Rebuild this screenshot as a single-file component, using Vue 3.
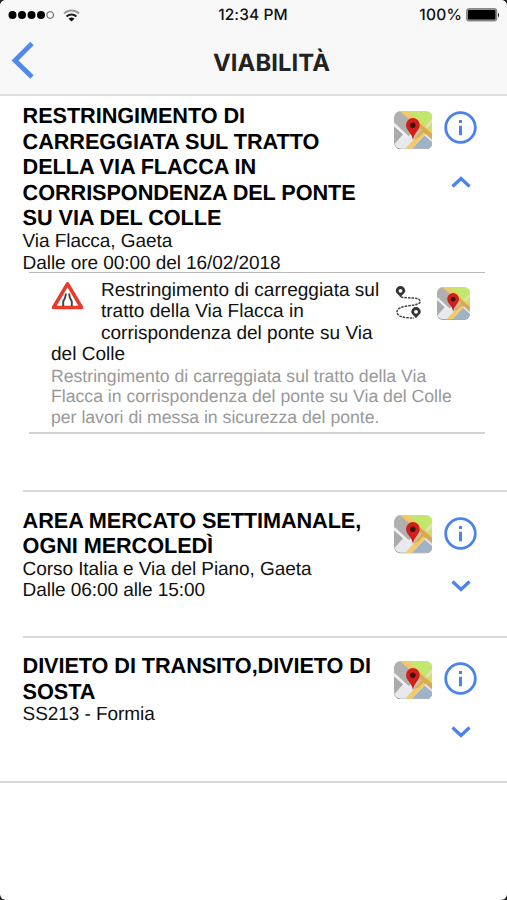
<template>
  <div class="screen">
    <svg class="sprite" aria-hidden="true">
      <symbol id="map" viewBox="0 0 38 38">
        <clipPath id="map-clip"><rect width="38" height="37.2" rx="7" /></clipPath>
        <rect y=".8" width="38" height="37.2" rx="7" fill="#8d918f" />
        <g clip-path="url(#map-clip)">
          <rect width="38" height="38" fill="#e7e9ed" />
          <path d="M0 0h10l14 15-10 10L0 12z" fill="#b0b0b0" />
          <path d="M0 15l9 8-9 10z" fill="#a9abac" />
          <path d="M0 13l14 13" stroke="#f0f0ee" stroke-width="2.5" />
          <path d="M12 0h26v22L28 16z" fill="#c3e66d" />
          <path d="M17 38l13-14 8 7v7z" fill="#9eb3c5" />
          <path d="M38 9L28 20" stroke="#e9dfbd" stroke-width="2.5" />
          <path d="M6 -3l34 29" stroke="#f2c869" stroke-width="5" />
          <path d="M31 19L11 41" stroke="#f3ca68" stroke-width="5" />
          <path d="M24 11l14 12v6l-9-8-5 5-5 2z" fill="#a77c32" opacity=".4" />
        </g>
        <path d="M18.5 7a6.7 6.7 0 0 0-6.7 6.8c0 5 5.4 7.3 6.9 14.4 1.4-7.1 6.6-9.4 6.6-14.4A6.7 6.7 0 0 0 18.5 7z" fill="#cf2019" />
        <circle cx="18.5" cy="14" r="2.7" fill="#41100d" />
      </symbol>
      <symbol id="info" viewBox="0 0 33 33">
        <circle cx="16.5" cy="16.5" r="14.8" fill="none" stroke="#4a83ec" stroke-width="2.8" />
        <path d="M16.5 14.8v9.4M16.5 9v3" stroke="#4a83ec" stroke-width="3" />
      </symbol>
      <symbol id="chevron" viewBox="0 0 20 12">
        <path d="M1.5 1.5l8.5 8 8.5-8" fill="none" stroke="#4a83ec" stroke-width="3.2" />
      </symbol>
    </svg>

    <header class="header">
      <div class="status">
        <div class="status-left">
          <svg width="46" height="10" viewBox="0 0 46 10">
            <circle v-for="n in 4" :key="n" :cx="n * 9.5 - 5" cy="5" r="4" />
            <circle cx="42.2" cy="5" r="3.4" fill="none" stroke="#555" />
          </svg>
          <svg width="17" height="13" viewBox="0 0 17 13" fill="none" stroke-width="2">
            <path d="M1 4.5a11 11 0 0 1 15 0" stroke="#9b9b9b" />
            <path d="M3.500 7.500a7.200 7.200 0 0 1 10 0" stroke="#222" />
            <path d="M8.500 12.500L5.500 9.800a4.500 4.500 0 0 1 6 0z" fill="#111" />
          </svg>
        </div>
        <span class="time">12:34 PM</span>
        <div class="status-right">
          <span class="percent">100%</span>
          <svg width="34" height="14" viewBox="0 0 34 14">
            <rect x=".7" y=".7" width="30" height="12.2" rx="1.8" fill="#999" stroke="#777" />
            <rect x="2" y="2" width="27.4" height="9.6" rx="1" />
            <path d="M32 4.5q2 2.500 0 5z" />
          </svg>
        </div>
      </div>
      <div class="navbar">
        <button class="back" aria-label="Indietro">
          <svg width="24" height="38" viewBox="0 0 24 38">
            <path d="M21 2.500L4 19.500l17 16.500" fill="none" stroke="#5189ec" stroke-width="4.800" />
          </svg>
        </button>
        <h1 class="title">VIABILITÀ</h1>
      </div>
    </header>

    <main class="list">
      <article v-for="item in items" :key="item.title" :class="['item', { open: item.detail }]">
        <div class="summary">
          <div class="text">
            <h2>{{ item.title }}</h2>
            <p>{{ item.place }}</p>
            <p v-if="item.time">{{ item.time }}</p>
          </div>
          <svg class="map"><use href="#map" /></svg>
          <div class="controls">
            <svg class="info"><use href="#info" /></svg>
            <svg class="chevron"><use href="#chevron" /></svg>
          </div>
        </div>
        <section v-if="item.detail" class="detail">
          <svg class="sign" viewBox="0 0 33 29">
            <path d="M16.500 2.800L30.500 26.500h-28z" fill="#fff" stroke="#e8392c" stroke-width="3.600" stroke-linejoin="round" />
            <path d="M15 12.500l-1 4.500-1.800 3.500v4.500M18 12.500l1 4.500 1.800 3.500v4.500" fill="none" stroke="#454545" stroke-width="1.900" />
          </svg>
          <div class="detail-icons">
            <svg class="route" viewBox="0 0 27 34">
              <path d="M6 11c7 2 20-1 19 5-1 5-23 2-23 10 0 5 8 6 17 6" fill="none" stroke="#444" stroke-width="1.500" stroke-dasharray="2.500 1" />
              <path d="M5.500 11.500C4 8.500.8 7.500.8 4.800a4.700 4.700 0 0 1 9.400 0c0 2.700-3.200 3.700-4.700 6.700z" fill="#333" />
              <circle cx="5.500" cy="4.800" r="1.900" fill="#fff" />
              <path d="M21 32.500c-1.500-3-4.700-4-4.700-6.700a4.700 4.700 0 0 1 9.400 0c0 2.700-3.200 3.700-4.700 6.700z" fill="#333" />
              <circle cx="21" cy="25.800" r="1.900" fill="#fff" />
            </svg>
            <svg class="map small"><use href="#map" /></svg>
          </div>
          <p>{{ item.detail.title }}</p>
          <p class="note">{{ item.detail.note }}</p>
        </section>
      </article>
    </main>
  </div>
</template>

<script setup>
const items = [
  {
    title: 'RESTRINGIMENTO DI CARREGGIATA SUL TRATTO DELLA VIA FLACCA IN CORRISPONDENZA DEL PONTE SU VIA DEL COLLE',
    place: 'Via Flacca, Gaeta',
    time: 'Dalle ore 00:00 del 16/02/2018',
    detail: {
      title: 'Restringimento di carreggiata sul tratto della Via Flacca in corrispondenza del ponte su Via del Colle',
      note: 'Restringimento di carreggiata sul tratto della Via Flacca in corrispondenza del ponte su Via del Colle per lavori di messa in sicurezza del ponte.'
    }
  },
  {
    title: 'AREA MERCATO SETTIMANALE, OGNI MERCOLEDÌ',
    place: 'Corso Italia e Via del Piano, Gaeta',
    time: 'Dalle 06:00 alle 15:00'
  },
  {
    title: 'DIVIETO DI TRANSITO,DIVIETO DI SOSTA',
    place: 'SS213 - Formia'
  }
];
</script>

<style>
body { margin: 0; background: #222; }
</style>

<style scoped>
.screen {
  height: 900px;
  border-radius: 6px;
  overflow: hidden;
  background: #fff;
  color: #111;
  font-family: "Liberation Sans", Arial, sans-serif;
  font-size: 19.05px;
  line-height: 21.6px;
  text-rendering: geometricPrecision;
}
.sprite { position: absolute; width: 0; height: 0; }
svg { display: block; flex: none; }
h1, h2, p { margin: 0; }

.header {
  box-sizing: border-box;
  height: 96px;
  background: #f8f8f8;
  border-bottom: 2px solid #dedede;
  font-family: Inter, sans-serif;
}
.status {
  display: grid;
  grid-template-columns: 1fr auto 1fr;
  align-items: center;
  height: 30px;
  padding: 0 7px 0 8px;
  font-size: 15.5px;
  font-weight: 500;
}
.status-left, .status-right { display: flex; align-items: center; }
.status-left { gap: 9px; }
.status-right { justify-content: flex-end; gap: 4px; }
.percent { letter-spacing: .2px; }
.time { padding-right: 2px; letter-spacing: .1px; }

.navbar {
  display: grid;
  grid-template-columns: 60px 1fr 60px;
  align-items: center;
  height: 60px;
}
.back { padding: 0 0 0 11px; border: 0; background: none; }
.title {
  padding: 5px 0 0 36px;
  text-align: center;
  font-size: 23.8px;
  font-weight: 700;
  line-height: 28px;
  letter-spacing: .1px;
  color: #222;
}

.item {
  box-sizing: border-box;
  height: 145.5px;
  margin-left: 22.6px;
  padding-top: 15.5px;
  border-bottom: 2px solid #d8d8d8;
}
.item.open { height: 396px; padding-top: 7px; }
.item:last-child { margin-left: 0; padding-left: 22.6px; }

.summary { display: flex; align-items: flex-start; }
.text { width: 357px; margin-right: 14px; letter-spacing: -.08px; }
.text h2 {
  font-size: 21.7px;
  font-weight: 700;
  line-height: 25.6px;
  color: #000;
}
.map { width: 38.6px; height: 38.6px; margin-top: 7.5px; }
.controls {
  display: flex;
  flex-direction: column;
  align-items: center;
  gap: 30.5px;
  margin: 9px 0 0 12px;
}
.info { width: 33px; height: 33px; }
.chevron { width: 20px; height: 12px; }
.open .controls { margin-top: 7.5px; gap: 32.5px; }
.open .chevron { transform: rotate(180deg); }

.detail {
  box-sizing: border-box;
  height: 162px;
  margin: -2px 22px 0 6.4px;
  padding: 6.4px 15px 0 22px;
  border-top: 1px solid #bbb;
  border-bottom: 2px solid #d3d3d3;
}
.sign { float: left; width: 33px; height: 29px; margin: 1px 17px 14px 0; }
.detail-icons {
  float: right;
  display: flex;
  gap: 15px;
  margin: 6px 0 22px 10px;
}
.route { width: 27px; height: 34px; }
.map.small { width: 33px; height: 33px; margin-top: 1px; }
.note {
  font-size: 17.65px;
  line-height: 20.3px;
  color: #999;
}
</style>
